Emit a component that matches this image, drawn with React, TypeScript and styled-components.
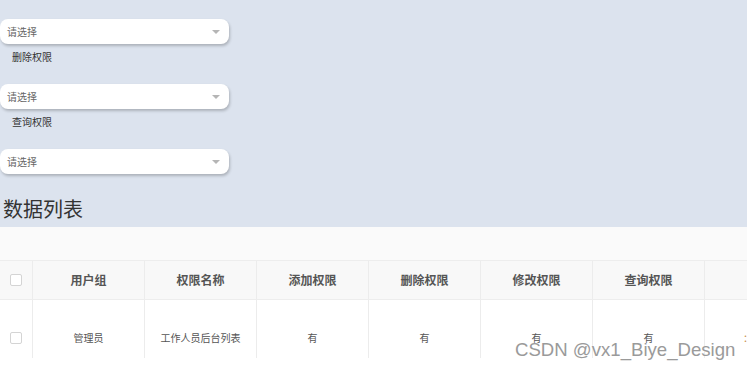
import styled, { createGlobalStyle } from 'styled-components';

const GlobalStyle = createGlobalStyle`
  html, body {
    margin: 0;
    padding: 0;
    background: #ffffff;
    overflow: hidden;
  }
  body {
    font-family: "Noto Sans CJK SC", "Noto Sans", sans-serif;
  }
`;

const Page = styled.div`
  position: relative;
  width: 747px;
  height: 372px;
  overflow: hidden;
  background: #ffffff;
`;

const FilterPanel = styled.div`
  background: #dce3ee;
  padding-top: 19px;
  height: 227px;
  box-sizing: border-box;
`;

const Field = styled.div`
  display: flex;
  flex-direction: column;
  margin-bottom: 21px;

  &:last-of-type {
    margin-bottom: 0;
  }
`;

const SelectBox = styled.div`
  width: 229px;
  height: 25px;
  box-sizing: border-box;
  background: #ffffff;
  border-radius: 8px;
  box-shadow: 1px 2px 3px rgba(0, 0, 0, 0.22);
  display: flex;
  align-items: center;
  justify-content: space-between;
  padding: 0 9px 0 7px;
  font-size: 10px;
  color: #666666;
`;

const Caret = styled.span`
  width: 0;
  height: 0;
  border-left: 4px solid transparent;
  border-right: 4px solid transparent;
  border-top: 4px solid #b5b5b5;
`;

const FieldLabel = styled.div`
  margin-top: 7px;
  padding-left: 12px;
  font-size: 10px;
  line-height: 12px;
  color: #333333;
`;

const Heading = styled.h2`
  margin: 22px 0 0 3px;
  font-size: 20px;
  line-height: 26px;
  font-weight: 400;
  color: #333333;
`;

const Toolbar = styled.div`
  height: 33px;
  background: #fafafa;
`;

const Row = styled.div<{ $head?: boolean }>`
  display: grid;
  grid-template-columns: 33px repeat(6, 112px) 112px;
  height: ${(p) => (p.$head ? '40px' : '58px')};
  background: ${(p) => (p.$head ? '#f8f8f8' : '#ffffff')};
  border-top: ${(p) => (p.$head ? '1px solid #ededed' : 'none')};
  border-bottom: ${(p) => (p.$head ? '1px solid #ededed' : 'none')};
  box-sizing: border-box;
`;

const Cell = styled.div<{ $head?: boolean; $align?: 'left' | 'center' }>`
  display: flex;
  align-items: ${(p) => (p.$head ? 'center' : 'flex-start')};
  justify-content: ${(p) => (p.$align === 'left' ? 'flex-start' : 'center')};
  padding-top: ${(p) => (p.$head ? '0' : '32px')};
  padding-left: ${(p) => (p.$align === 'left' ? '38px' : '0')};
  box-sizing: border-box;
  border-right: 1px solid #ececec;
  font-size: ${(p) => (p.$head ? '12px' : '10px')};
  line-height: 12px;
  font-weight: ${(p) => (p.$head ? 700 : 400)};
  color: #555555;
  white-space: nowrap;
  overflow: hidden;

  &:last-child {
    border-right: none;
  }
`;

const Checkbox = styled.span`
  width: 12px;
  height: 12px;
  box-sizing: border-box;
  border: 1px solid #d4d4d4;
  border-radius: 2px;
  background: #ffffff;
`;

const ActionText = styled.span`
  color: #c9914f;
  font-size: 10px;
`;

const Watermark = styled.div`
  position: absolute;
  left: 515px;
  top: 339px;
  font-family: "Liberation Sans", Arial, sans-serif;
  font-size: 18.6px;
  line-height: 22px;
  color: #9a9a9a;
  text-shadow: 0 0 1px #ffffff;
  white-space: nowrap;
`;

const fields = ['删除权限', '查询权限'];
const headers = ['用户组', '权限名称', '添加权限', '删除权限', '修改权限', '查询权限'];
const row = ['管理员', '工作人员后台列表', '有', '有', '有', '有'];

export default function App() {
  return (
    <Page>
      <GlobalStyle />
      <FilterPanel>
        {fields.map((f) => (
          <Field key={f}>
            <SelectBox>
              请选择
              <Caret />
            </SelectBox>
            <FieldLabel>{f}</FieldLabel>
          </Field>
        ))}
        <Field>
          <SelectBox>
            请选择
            <Caret />
          </SelectBox>
        </Field>
        <Heading>数据列表</Heading>
      </FilterPanel>
      <Toolbar />
      <Row $head>
        <Cell $head>
          <Checkbox />
        </Cell>
        {headers.map((h) => (
          <Cell $head key={h}>
            {h}
          </Cell>
        ))}
        <Cell $head />
      </Row>
      <Row>
        <Cell>
          <Checkbox />
        </Cell>
        {row.map((v, i) => (
          <Cell key={i}>{v}</Cell>
        ))}
        <Cell $align="left">
          <ActionText>：详情</ActionText>
        </Cell>
      </Row>
      <Watermark>CSDN @vx1_Biye_Design</Watermark>
    </Page>
  );
}
